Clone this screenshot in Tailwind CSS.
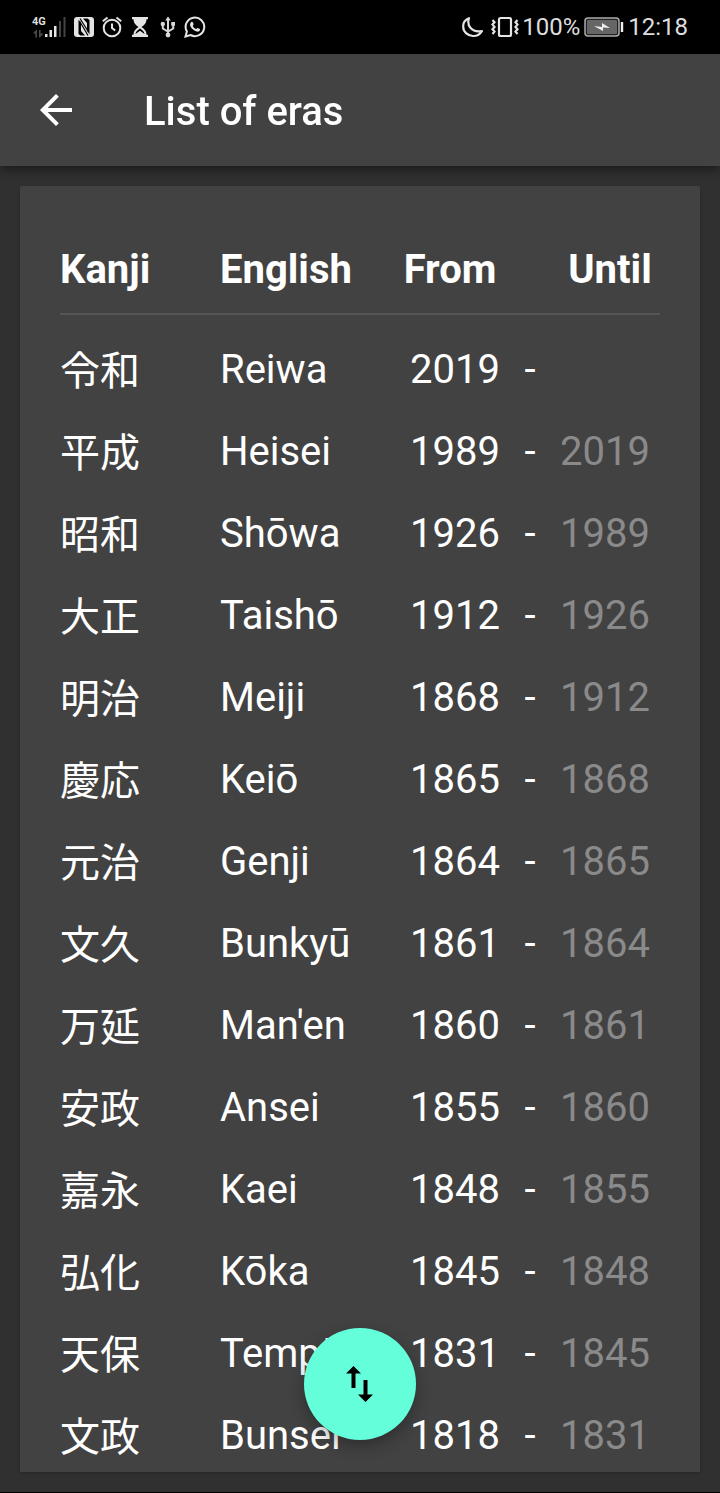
<!DOCTYPE html>
<html lang="en">
<head>
<meta charset="utf-8">
<meta name="viewport" content="width=device-width, initial-scale=1">
<title>List of eras</title>
<script src="https://cdn.jsdelivr.net/npm/@tailwindcss/browser@4"></script>
</head>
<body class="flex h-screen flex-col overflow-hidden border-b border-black bg-[#303030] font-['Roboto','Noto_Sans_CJK_JP',sans-serif] text-white">

<div class="flex h-[54px] shrink-0 items-center justify-between bg-black px-8 text-[#dedede]">
  <div class="flex items-center gap-2">
    <div class="flex h-[22px] w-[34px] items-end">
      <div class="flex w-3 flex-col">
        <span class="text-[11px] font-bold leading-3">4G</span>
        <svg class="mt-[2px] h-2 w-3" viewBox="0 0 12 8" fill="#4a4a4a" aria-hidden="true"><path d="M1 3.500 4 0h1v7.500H3.300V3.500zM7 0h1.500v3.500H11.500L8 7.500H7z"/></svg>
      </div>
      <svg class="h-[22px] w-[22px]" viewBox="0 0 22 22" aria-hidden="true"><path fill="#e4e4e4" d="M1 18h2.500v3H1zM5.500 14H8v7H5.500zM10 10h2.500v11H10z"/><path fill="#444" d="M15 5h2v16h-2zM19.500 1h2v20h-2z"/></svg>
    </div>
    <svg class="h-5 w-5" viewBox="0 0 20 20" aria-label="NFC"><rect width="20" height="20" rx="3" fill="#e4e4e4"/><path d="M4.500 2.500 7 6.500V14l4 4.500H6.500L4.500 17zM9 1.500h4.500l2 1.500v14.500L13 13.500V6z"/><path fill="none" stroke="#000" stroke-width="1.200" d="m5.500 4 8.500 14.500M6 1.500 14.500 15"/></svg>
    <svg class="h-[22px] w-5" viewBox="0 0 20 22" fill="none" stroke="#e4e4e4" stroke-width="2" aria-label="Alarm"><circle cx="10" cy="12" r="8.300"/><path d="M10 7.500V12l3.200 2.500M.8 5.200 5.500 1.500M19.200 5.200 14.500 1.500"/></svg>
    <svg class="ml-[2px] h-5 w-4" viewBox="0 0 16 20" aria-label="Hourglass"><path fill="#e4e4e4" d="M0 0h16v2.200h-1.500c0 3.800-2 5.800-5 7.800 3 2 5 4 5 7.800H16V20H0v-2.200h1.500c0-3.800 2-5.800 5-7.800-3-2-5-4-5-7.800H0z"/><path d="M3.500 17c.3-2.500 2-4 4.500-5.500 2.500 1.500 4.200 3 4.500 5.500L8 13.800z"/></svg>
    <svg class="ml-1 h-[22px] w-4" viewBox="0 0 16 22" fill="#d8d8d8" aria-label="USB"><path fill="none" stroke="#d8d8d8" stroke-width="2" d="M8 3v16M2.800 8v4.500L8 15.500l5.200-3V8"/><path d="m8 .5 2.800 4H5.200zM11.200 6H15v3.800h-3.800z"/><circle cx="2.800" cy="8" r="2.200"/><circle cx="8" cy="19" r="2.400"/></svg>
    <svg class="h-[22px] w-[22px]" viewBox="0 0 22 22" aria-label="WhatsApp"><path fill="none" stroke="#e4e4e4" stroke-width="2" d="m1.500 20.500 1.400-5A9.300 9.300 0 1 1 6.500 19z"/><path fill="#e4e4e4" d="M7.200 6c.5-.5 1.300-.5 1.600.2l.8 1.900c.2.500-.8 1.300-.8 1.800.7 1.500 1.900 2.500 3.300 3.100.5.100 1.200-1.200 1.700-1l2 1c.6.400.1 1.700-.6 2.200-1.400.9-3.100.3-4.800-.6-1.900-1.200-3.400-2.900-4.100-4.600-.5-1.400-.3-2.900.9-4z"/></svg>
  </div>
  <div class="flex items-center text-2xl">
    <svg class="mr-2 h-[22px] w-[21px]" viewBox="0 0 21 20" fill="none" stroke="#e4e4e4" stroke-width="2.200" stroke-linejoin="round" aria-label="Do not disturb"><path d="M7 1.200C4.500 8.500 9.500 16 20 14c-2 3.500-5.500 5.200-9.200 5C5.500 18.700 1.200 14.800 1.200 9.800.9 6 3.300 2.700 7 1.200z"/></svg>
    <svg class="h-[22px] w-7" viewBox="0 0 28 22" fill="none" stroke="#e4e4e4" stroke-width="2.200" aria-label="Vibrate"><rect x="8" y="2" width="12" height="18" rx="1.500"/><path stroke-width="2.200" d="m1.500 4 2 2.300-2 2.300 2 2.300-2 2.300 2 2.300-2 2.500M26.500 4l-2 2.300 2 2.300-2 2.300 2 2.300-2 2.300 2 2.500"/></svg>
    <span class="ml-[3px]">100%</span>
    <svg class="ml-1 mr-1 h-5 w-10" viewBox="0 0 40 20" aria-label="Battery charging"><rect x="1" y="1" width="34" height="18" rx="3" fill="#222" stroke="#aaa" stroke-width="1.500"/><rect x="3" y="3" width="30" height="14" rx="1" fill="#666"/><path fill="#eee" d="M36.800 5h2.400v10h-2.400zM10 9l8 1V6l8 5-7-.5V14z"/></svg>
    <span>12:18</span>
  </div>
</div>

<header class="relative z-10 flex h-28 shrink-0 items-center bg-[#424242] px-8 shadow-[0_4px_10px_rgba(0,0,0,0.45)]">
  <button type="button" aria-label="Back" class="flex size-12 items-center justify-center">
    <svg class="size-12" viewBox="0 0 24 24" fill="#fff"><path d="M20 11H7.830l5.590-5.590L12 4l-8 8 8 8 1.410-1.410L7.830 13H20v-2z"/></svg>
  </button>
  <h1 class="ml-16 pt-1 text-[40px] font-medium leading-12">List of eras</h1>
</header>

<main class="relative min-h-0 flex-1 p-5">
  <div class="h-full overflow-y-auto rounded-t-[2px] bg-[#424242] px-10 pt-10 shadow-[0_1px_3px_rgba(0,0,0,0.2)] [scrollbar-width:none]">
    <table class="w-full table-fixed border-collapse text-[40px] leading-12">
      <colgroup><col class="w-40"><col><col class="w-[100px]"><col class="w-[60px]"><col class="w-[100px]"></colgroup>
      <thead>
        <tr class="h-[88px] border-b-2 border-[#555] align-middle font-bold">
          <th class="p-0 text-left">Kanji</th><th class="p-0 text-left">English</th><th class="p-0 text-center">From</th><th class="p-0"></th><th class="p-0 text-center">Until</th>
        </tr>
        <tr class="h-[15px]"><td colspan="5" class="p-0"></td></tr>
      </thead>
      <tbody id="eras"></tbody>
    </table>
  </div>
  <button type="button" aria-label="Reverse order" class="absolute bottom-[52px] left-1/2 flex size-28 -translate-x-1/2 items-center justify-center rounded-full bg-[#64ffda] shadow-[0_6px_16px_rgba(0,0,0,0.3)]">
    <svg class="h-9 w-7" viewBox="0 0 28 36" fill="#000"><path d="M7.500 0 0 7.500h5.500V22h4V7.500H15zM19.500 14h-4 4zM17.500 14v14.500H12l7.500 7.500 7.500-7.500h-5.500V14z"/></svg>
  </button>
</main>

<script>
const eras = [
  ["令和","Reiwa","2019",""],
  ["平成","Heisei","1989","2019"],
  ["昭和","Shōwa","1926","1989"],
  ["大正","Taishō","1912","1926"],
  ["明治","Meiji","1868","1912"],
  ["慶応","Keiō","1865","1868"],
  ["元治","Genji","1864","1865"],
  ["文久","Bunkyū","1861","1864"],
  ["万延","Man'en","1860","1861"],
  ["安政","Ansei","1855","1860"],
  ["嘉永","Kaei","1848","1855"],
  ["弘化","Kōka","1845","1848"],
  ["天保","Tempō","1831","1845"],
  ["文政","Bunsei","1818","1831"]
];
document.getElementById("eras").innerHTML = eras.map(([kanji, name, from, until]) =>
  `<tr class="h-[82px]"><td lang="ja" class="p-0 pt-1">${kanji}</td><td class="p-0">${name}</td><td class="p-0 text-right">${from}</td><td class="p-0 text-center">-</td><td class="p-0 text-[#8a8a8a]">${until}</td></tr>`
).join("");
</script>
</body>
</html>
